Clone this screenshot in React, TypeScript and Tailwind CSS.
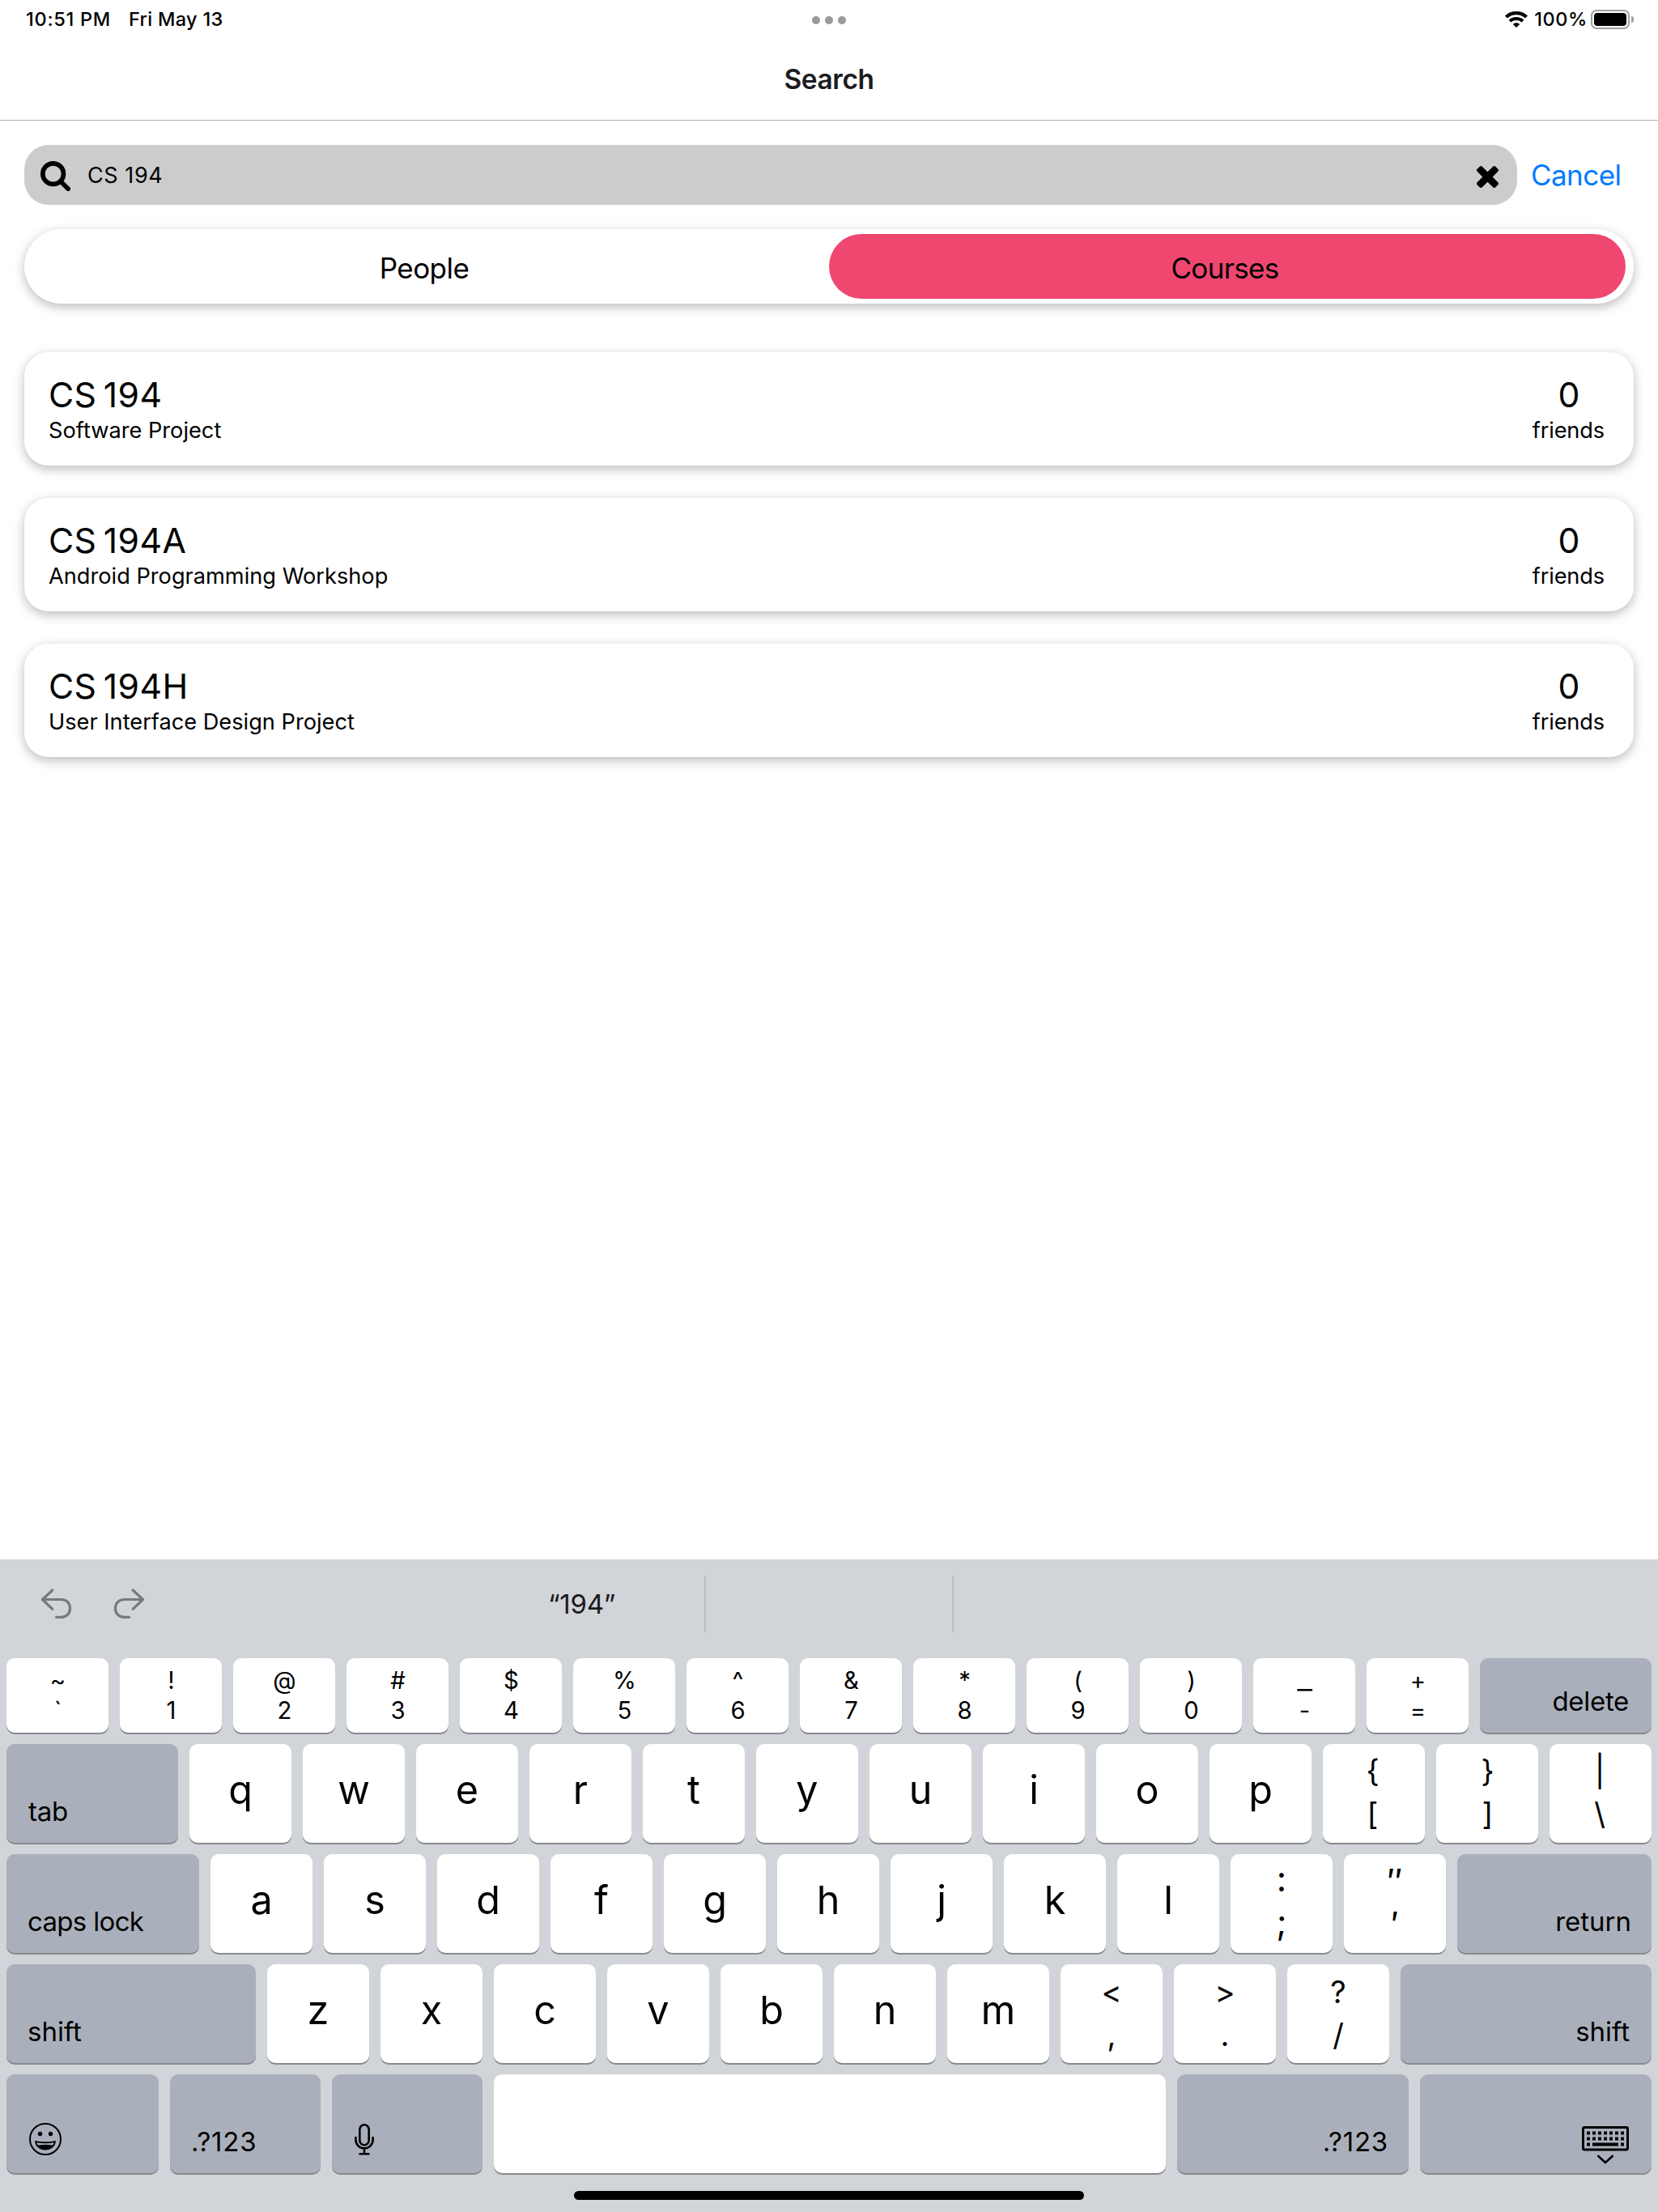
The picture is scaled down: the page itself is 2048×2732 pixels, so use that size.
import React from 'react';

type Course = { code: string; title: string; friends: number };

const courses: Course[] = [
  { code: 'CS 194', title: 'Software Project', friends: 0 },
  { code: 'CS 194A', title: 'Android Programming Workshop', friends: 0 },
  { code: 'CS 194H', title: 'User Interface Design Project', friends: 0 },
];

const digitKeys = [
  ['~', '`'], ['!', '1'], ['@', '2'], ['#', '3'], ['$', '4'], ['%', '5'], ['^', '6'],
  ['&', '7'], ['*', '8'], ['(', '9'], [')', '0'], ['_', '-'], ['+', '='],
];

function WifiIcon() {
  return (
    <svg className="h-5 w-7" viewBox="0 0 28 20" fill="none" stroke="#000">
      <path d="M1.5 7C8.4 .5 19.6 .5 26.500 7" strokeWidth="4.2" />
      <path d="M6 11.900C10.400 7.900 17.600 7.900 22 11.900" strokeWidth="4" />
      <path d="M14 20L9.800 15.900C12 13.800 16 13.800 18.200 15.900Z" fill="#000" stroke="none" />
    </svg>
  );
}

function SearchIcon() {
  return (
    <svg className="h-[37px] w-[37px]" viewBox="0 0 1664 1664" fill="none" stroke="#000" strokeWidth="256" strokeLinecap="round">
      <circle cx="704" cy="704" r="576" />
      <path d="M1110 1110L1536 1536" />
    </svg>
  );
}

function ClearIcon() {
  return (
    <svg className="h-[27px] w-[27px]" viewBox="302 366 1188 1188">
      <path d="M1490 1322q0 40-28 68l-136 136q-28 28-68 28t-68-28L896 1232l-294 294q-28 28-68 28t-68-28l-136-136q-28-28-28-68t28-68l294-294-294-294q-28-28-28-68t28-68l136-136q28-28 68-28t68 28l294 294 294-294q28-28 68-28t68 28l136 136q28 28 28 68t-28 68L1168 960l294 294q28 28 28 68z" />
    </svg>
  );
}

function UndoIcon({ flipped = false }: { flipped?: boolean }) {
  return (
    <svg
      className={flipped ? 'h-10 w-10 -scale-x-100' : 'h-10 w-10'}
      viewBox="0 0 40 40"
      fill="none"
      stroke="#77797c"
      strokeWidth="3.2"
      strokeLinecap="round"
      strokeLinejoin="round"
    >
      <path d="M14.800 3L2.500 14.500L14.800 26.300" />
      <path d="M3 14.500H25.500C32.500 14.500 36.500 19.200 36.500 25.400S32.500 36.300 25.500 36.300H19.500" />
    </svg>
  );
}

function EmojiIcon() {
  return (
    <svg className="h-10 w-10" viewBox="0 0 40 40">
      <circle cx="20" cy="20" r="19" fill="none" stroke="#000" strokeWidth="2" />
      <circle cx="13.500" cy="13.500" r="2.700" />
      <circle cx="26.500" cy="13.500" r="2.700" />
      <path d="M7 22C15 23.700 25 23.700 33 22C32.500 29.500 26.500 33.500 20 33.500S7.500 29.500 7 22Z" />
      <path d="M9.300 24.200C16 25.600 24 25.600 30.700 24.200C30.300 25.600 29.600 26.800 28.900 27.600C23 26.600 17 26.600 11.100 27.600C10.400 26.800 9.700 25.600 9.300 24.200Z" fill="#aab0bb" />
    </svg>
  );
}

function MicIcon() {
  return (
    <svg className="h-10 w-6" viewBox="0 0 24 40" fill="none" stroke="#000" strokeWidth="2.6" strokeLinecap="round">
      <rect x="6.300" y="2.300" width="11.400" height="25" rx="5.700" />
      <path d="M1.400 18V20.500C1.400 27 6 31.300 12 31.300S22.600 27 22.600 20.500V18" />
      <path d="M12 31.300V38M6.500 38.300H17.500" />
    </svg>
  );
}

function HideKeyboardIcon() {
  const columns = [0, 1, 2, 3, 4, 5, 6];
  return (
    <svg className="h-12 w-[58px]" viewBox="0 0 58 48">
      <rect x="1.500" y="1.500" width="55" height="27.500" rx="1.800" fill="none" stroke="#000" strokeWidth="3" />
      {columns.map((c) => (
        <rect key={c} x={6 + c * 7} y="6.500" width="4" height="4" />
      ))}
      {columns.map((c) => (
        <rect key={c} x={6 + c * 7} y="13.500" width="4" height="4" />
      ))}
      <rect x="6" y="20.500" width="4" height="4" />
      <rect x="13" y="20.500" width="32" height="4" />
      <rect x="48" y="20.500" width="4" height="4" />
      <path d="M19.500 36.300L29 45L38.500 36.300" fill="none" stroke="#000" strokeWidth="2.600" />
    </svg>
  );
}

function DigitKey({ upper, lower }: { upper: string; lower: string }) {
  return (
    <div className="flex w-[126px] flex-col items-center rounded-[10px] bg-white pt-[10px] pl-px text-[29.300px] leading-[36.500px] shadow-[0_2px_0_#898a8d]">
      <span className={upper === '_' ? 'scale-x-140' : ''}>{upper}</span>
      <span>{lower}</span>
    </div>
  );
}

function LetterKey({ children }: { children: string }) {
  return (
    <div className="flex w-[126px] items-center justify-center rounded-[10px] bg-white pb-[7px] text-[48.500px] leading-none shadow-[0_2px_0_#898a8d]">
      {children}
    </div>
  );
}

function SymbolKey({ upper, lower, size = 'text-[38px] pt-[8px]' }: { upper: string; lower: string; size?: string }) {
  return (
    <div className={`flex w-[126px] flex-col items-center rounded-[10px] bg-white leading-[53px] shadow-[0_2px_0_#898a8d] ${size}`}>
      <span>{upper}</span>
      <span>{lower}</span>
    </div>
  );
}

function ControlKey({ className, children }: { className: string; children: React.ReactNode }) {
  return (
    <div className={`flex items-end rounded-[10px] bg-[#aab0bb] text-[33px] leading-[40px] shadow-[0_2px_0_#898a8d] ${className}`}>
      {children}
    </div>
  );
}

function StatusBar() {
  return (
    <div className="grid h-[47px] grid-cols-3 items-center pr-[30px] pl-[32px] text-[23.500px] leading-none font-medium">
      <div className="flex">
        <span className="w-[127px] tracking-[0.730px]">10:51 PM</span>
        <span className="tracking-[0.310px]">Fri May 13</span>
      </div>
      <div className="flex justify-center gap-1.5 pt-[3px] pr-[2px]">
        <span className="size-2.5 rounded-full bg-[#999]" />
        <span className="size-2.5 rounded-full bg-[#999]" />
        <span className="size-2.5 rounded-full bg-[#999]" />
      </div>
      <div className="flex items-center justify-end">
        <WifiIcon />
        <span className="ml-[8px] tracking-[0.600px]">100%</span>
        <div className="ml-[4px] flex h-6 w-12 rounded-[7px] border-2 border-[#a0a0a0] p-[2px]">
          <div className="flex-1 rounded-[4px] bg-black" />
        </div>
        <div className="ml-[2px] h-2 w-[3px] rounded-r-full bg-[#a0a0a0]" />
      </div>
    </div>
  );
}

function CourseCard({ course }: { course: Course }) {
  return (
    <div className="flex h-[140px] justify-between rounded-[30px] bg-white pt-[27px] pr-[36px] pl-[30px] shadow-[0_4px_14px_rgba(0,0,0,0.270)]">
      <div>
        <div className="text-[42.700px] leading-[52px] tracking-[0.400px] [word-spacing:-4px]">{course.code}</div>
        <div className="text-[27.200px] leading-[36px]">{course.title}</div>
      </div>
      <div className="text-center">
        <div className="pl-px text-[42.700px] leading-[52px]">{course.friends}</div>
        <div className="text-[27.200px] leading-[36px] tracking-[-0.140px]">friends</div>
      </div>
    </div>
  );
}

function Keyboard() {
  return (
    <div className="flex h-[806px] flex-col bg-[#d1d4d9]">
      <div className="flex h-[122px] items-center pb-3">
        <div className="flex w-[565px] gap-[49px] pl-[50px]">
          <UndoIcon />
          <UndoIcon flipped />
        </div>
        <div className="flex h-[70px] w-[307px] items-center justify-center border-r-2 border-[#bbbec3] pt-[2px] pl-[2px] text-[33px] tracking-[-0.300px] text-[#1a1a1a]">
          “194”
        </div>
        <div className="h-[70px] w-[306px] border-r-2 border-[#bbbec3]" />
      </div>
      <div className="flex flex-col gap-3.5 px-2">
        <div className="flex h-[92px] gap-3.5">
          {digitKeys.map(([upper, lower]) => (
            <DigitKey key={lower} upper={upper} lower={lower} />
          ))}
          <ControlKey className="flex-1 justify-end pr-[28px] pb-[19px] tracking-[-0.300px]">delete</ControlKey>
        </div>
        <div className="flex h-[122px] gap-3.5">
          <ControlKey className="w-[212px] pb-[19px] pl-[27px] tracking-[-0.250px]">tab</ControlKey>
          {[...'qwertyuiop'].map((k) => (
            <LetterKey key={k}>{k}</LetterKey>
          ))}
          <SymbolKey upper="{" lower="[" size="text-[38px] pt-[7px] pr-[3px]" />
          <SymbolKey upper="}" lower="]" size="text-[38px] pt-[7px] pl-px" />
          <SymbolKey upper="|" lower="\" size="text-[38px] pt-[7px] pr-[2px]" />
        </div>
        <div className="flex h-[122px] gap-3.5">
          <ControlKey className="w-[238px] pb-[19px] pl-[26px] tracking-[-0.680px]">caps lock</ControlKey>
          {[...'asdfghjkl'].map((k) => (
            <LetterKey key={k}>{k}</LetterKey>
          ))}
          <SymbolKey upper=":" lower=";" size="text-[43px] pt-[4px]" />
          <SymbolKey upper="″" lower="′" size="text-[43px] pt-[7px]" />
          <ControlKey className="flex-1 justify-end pr-[25px] pb-[19px]">return</ControlKey>
        </div>
        <div className="flex h-[122px] gap-3.5">
          <ControlKey className="w-[308px] pb-[19px] pl-[26px]">shift</ControlKey>
          {[...'zxcvbnm'].map((k) => (
            <LetterKey key={k}>{k}</LetterKey>
          ))}
          <SymbolKey upper="<" lower="," />
          <SymbolKey upper=">" lower="." />
          <SymbolKey upper="?" lower="/" />
          <ControlKey className="flex-1 justify-end pr-[27px] pb-[19px]">shift</ControlKey>
        </div>
        <div className="flex h-[122px] gap-3.5">
          <ControlKey className="w-[188px] pb-[22px] pl-[28px]"><EmojiIcon /></ControlKey>
          <ControlKey className="w-[186px] pb-[19px] pl-[26px] tracking-[0.790px]">.?123</ControlKey>
          <ControlKey className="w-[186px] pb-[22px] pl-[28px]"><MicIcon /></ControlKey>
          <div className="w-[830px] rounded-[10px] bg-white shadow-[0_2px_0_#898a8d]" />
          <ControlKey className="w-[286px] justify-end pr-[25px] pb-[19px] tracking-[0.790px]">.?123</ControlKey>
          <ControlKey className="w-[286px] justify-end pr-[28px] pb-[10px]"><HideKeyboardIcon /></ControlKey>
        </div>
      </div>
      <div className="mx-auto mt-[22px] h-[11px] w-[630px] rounded-full bg-black" />
    </div>
  );
}

export default function App() {
  return (
    <div className="flex h-[2732px] w-[2048px] flex-col overflow-hidden bg-white font-['Inter',sans-serif] text-black">
      <StatusBar />
      <div className="flex h-[102px] items-center justify-center border-b border-[#b2b2b2] pt-[2px] text-[33.500px] font-semibold tracking-[-0.450px] text-[#1c1c1e]">
        Search
      </div>
      <div className="flex flex-1 flex-col px-[30px] pt-[30px]">
        <div className="flex items-center">
          <div className="flex h-[74px] w-[1844px] items-center rounded-[30px] bg-[#ccc] pr-[23px] pl-[20px]">
            <div className="pt-[3px]"><SearchIcon /></div>
            <span className="ml-[21px] flex-1 pt-[2px] text-[27px] tracking-[0.570px]">CS 194</span>
            <div className="pt-[4px]"><ClearIcon /></div>
          </div>
          <span className="ml-[17px] text-[35px] tracking-[-0.550px] text-[#007aff]">Cancel</span>
        </div>
        <div className="mt-[30px] flex h-[92px] rounded-full bg-white py-[6px] pr-[10px] shadow-[0_4px_14px_rgba(0,0,0,0.270)]">
          <div className="flex flex-1 items-center justify-center pt-[4px] pr-[6px] text-[35px] tracking-[-0.550px]">People</div>
          <div className="flex w-[984px] items-center justify-center rounded-full bg-[#ef476f] pt-[4px] pr-[6px] text-[35px] tracking-[-0.680px]">
            Courses
          </div>
        </div>
        <div className="mt-[60px] flex flex-col gap-10">
          {courses.map((course) => (
            <CourseCard key={course.code} course={course} />
          ))}
        </div>
      </div>
      <Keyboard />
    </div>
  );
}
